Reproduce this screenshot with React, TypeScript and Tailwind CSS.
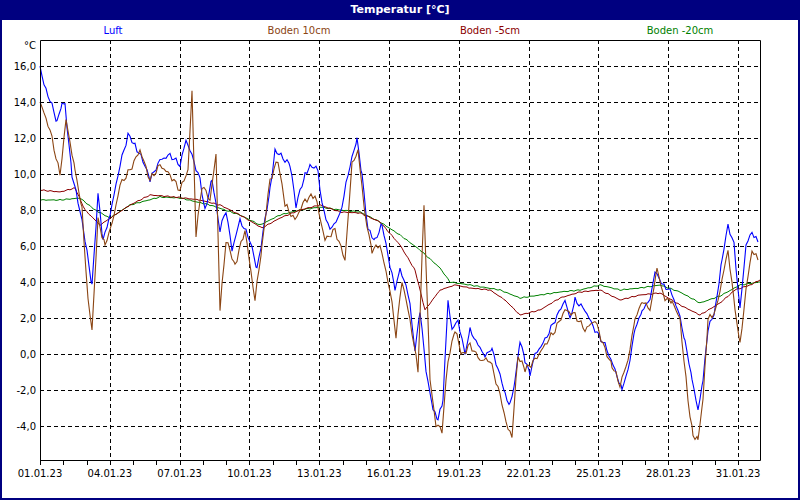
const blue = [
  [40, 66], [44, 85], [50, 100], [54, 112], [57, 122], [62, 102], [65, 105], [72, 175], [80, 210], [85, 240], [92, 285], [98, 195], [103, 240], [110, 215], [120, 165], [128, 135], [135, 145], [145, 165], [150, 180], [160, 160], [170, 155], [180, 165], [186, 140], [190, 150], [200, 180], [205, 210], [212, 180], [220, 230], [226, 210], [232, 250], [240, 220], [250, 240], [257, 270], [265, 220], [270, 190], [275, 150], [285, 160], [290, 165], [296, 205], [305, 175], [310, 165], [318, 170], [322, 205], [330, 230], [340, 215], [350, 165], [357, 140], [362, 175], [368, 230], [375, 240], [382, 225], [390, 265], [395, 290], [400, 270], [406, 285], [410, 305], [415, 350], [420, 310], [426, 370], [433, 410], [438, 420], [443, 400], [448, 300], [452, 330], [458, 320], [465, 355], [470, 330], [478, 345], [485, 355], [492, 350], [500, 375], [505, 395], [510, 405], [515, 380], [520, 340], [525, 360], [530, 375], [535, 355], [545, 340], [555, 320], [565, 300], [570, 320], [575, 300], [585, 310], [595, 330], [605, 345], [615, 370], [622, 390], [628, 370], [635, 330], [642, 310], [650, 300], [655, 270], [662, 285], [670, 290], [678, 310], [685, 340], [692, 380], [698, 410], [703, 380], [708, 330], [715, 310], [722, 260], [728, 225], [734, 245], [740, 310], [746, 245], [752, 232], [758, 242],
];
const brown = [
  [40, 102], [50, 130], [60, 175], [66, 120], [75, 170], [82, 210], [88, 300], [92, 330], [98, 220], [105, 245], [112, 225], [120, 185], [130, 170], [140, 150], [150, 180], [160, 165], [170, 175], [180, 190], [188, 170], [192, 92], [196, 235], [202, 185], [210, 200], [216, 155], [220, 310], [226, 240], [235, 265], [245, 230], [255, 300], [262, 245], [270, 180], [278, 160], [285, 205], [295, 220], [305, 200], [315, 195], [325, 240], [335, 230], [345, 260], [352, 165], [358, 150], [365, 215], [372, 250], [380, 245], [390, 290], [396, 335], [402, 280], [410, 320], [418, 370], [424, 205], [430, 380], [436, 425], [442, 430], [448, 360], [455, 330], [462, 355], [470, 345], [480, 360], [490, 360], [500, 395], [508, 430], [512, 435], [518, 355], [525, 370], [535, 360], [545, 345], [555, 330], [565, 310], [575, 315], [585, 330], [595, 320], [605, 350], [612, 365], [620, 385], [628, 360], [635, 320], [642, 300], [650, 310], [657, 270], [665, 300], [672, 300], [680, 320], [688, 400], [693, 435], [698, 440], [703, 400], [708, 320], [716, 310], [722, 280], [728, 250], [735, 310], [740, 345], [746, 290], [752, 250], [758, 260],
];
const red = [
  [40, 190], [60, 192], [75, 188], [85, 210], [100, 225], [115, 215], [130, 205], [150, 195], [175, 197], [200, 200], [220, 205], [240, 215], [262, 228], [280, 218], [300, 210], [320, 205], [340, 212], [360, 213], [380, 222], [400, 245], [415, 270], [425, 310], [440, 290], [455, 285], [470, 288], [490, 290], [505, 300], [520, 315], [540, 310], [560, 298], [580, 292], [600, 290], [620, 300], [640, 295], [660, 293], [680, 305], [700, 315], [720, 303], [735, 290], [750, 285], [760, 280],
];
const green = [
  [40, 200], [60, 200], [80, 198], [95, 210], [110, 218], [130, 205], [160, 197], [180, 198], [210, 205], [240, 215], [260, 225], [280, 215], [300, 210], [320, 207], [340, 210], [360, 212], [380, 222], [400, 235], [420, 250], [440, 268], [450, 282], [470, 285], [500, 290], [520, 298], [540, 295], [560, 292], [580, 290], [600, 285], [620, 290], [640, 288], [660, 285], [680, 292], [700, 303], [720, 296], [740, 285], [760, 282],
];

// resample every 2px and add a little deterministic wobble
const jitter = (a: number[][], amp: number, seed: number) => {
  const out: number[][] = [];
  for (let i = 0; i < a.length - 1; i++) {
    const [x0, y0] = a[i];
    const [x1, y1] = a[i + 1];
    for (let x = x0; x < x1; x += 2) {
      const t = (x - x0) / (x1 - x0);
      const n = Math.sin(x * 1.7 + seed) * Math.cos(x * 0.63 + seed * 2) * amp;
      out.push([x, y0 + (y1 - y0) * t + n]);
    }
  }
  out.push(a[a.length - 1]);
  return out;
};

const pts = (a: number[][]) => a.map(([x, y]) => `${x},${y.toFixed(1)}`).join(' ');
const dayX = (d: number) => 40 + d * 23.27;
const yVals = [16, 14, 12, 10, 8, 6, 4, 2, 0, -2, -4];
const yOf = (v: number) => 66 + (16 - v) * 18;
const dates = ['01', '04', '07', '10', '13', '16', '19', '22', '25', '28', '31'];

export default function App() {
  return (
    <div className="w-[800px] h-[500px] bg-white flex flex-col text-[11px]" style={{ fontFamily: '"DejaVu Sans", Verdana, sans-serif' }}>
      <div className="h-[20px] bg-[#000080] text-white font-bold flex items-center justify-center text-[11px]">
        Temperatur [°C]
      </div>
      <div className="flex-1 flex flex-col border-x-2 border-b-2 border-[#000080]">
        <div className="h-[20px] flex items-center -ml-[2px] text-[10px]">
          <div className="w-[226px] text-center text-[#0000ff]">Luft</div>
          <div className="w-[146px] text-center text-[#8b4513]">Boden 10cm</div>
          <div className="w-[236px] text-center text-[#8b0000]">Boden -5cm</div>
          <div className="w-[144px] text-center text-[#008000]">Boden -20cm</div>
        </div>
        <svg width="796" height="458" viewBox="2 40 796 458" className="block" fontSize="10">
          {yVals.map((v) => (
            <g key={v}>
              <line x1="40" x2="760" y1={yOf(v) + 0.5} y2={yOf(v) + 0.5} stroke="#000" strokeDasharray="4 3" />
              <text x="36" y={yOf(v) + 4} textAnchor="end" fill="#000">{v.toFixed(1).replace('.', ',')}</text>
            </g>
          ))}
          <text x="36" y="49" textAnchor="end" fill="#000">°C</text>
          {dates.map((d, i) => (
            <g key={d}>
              {i > 0 && <line x1={Math.round(dayX(i * 3)) + 0.5} x2={Math.round(dayX(i * 3)) + 0.5} y1="40" y2="460" stroke="#000" strokeDasharray="4 3" />}
              <text x={dayX(i * 3)} y="477" textAnchor="middle" fill="#000">{d}.01.23</text>
            </g>
          ))}
          {Array.from({ length: 31 }, (_, i) => (
            <line key={i} x1={Math.round(dayX(i)) + 0.5} x2={Math.round(dayX(i)) + 0.5} y1="460" y2="465" stroke="#000" />
          ))}
          <polyline points={pts(jitter(green, 0.6, 3))} fill="none" stroke="#008000" strokeWidth="1" />
          <polyline points={pts(jitter(red, 0.6, 5))} fill="none" stroke="#8b0000" strokeWidth="1" />
          <polyline points={pts(jitter(blue, 3, 1))} fill="none" stroke="#0000ff" strokeWidth="1.1" />
          <polyline points={pts(jitter(brown, 3.5, 7))} fill="none" stroke="#8b4513" strokeWidth="1.1" />
          <path d="M40.5 40.5 H760.5 V460.5 H40.5 Z" fill="none" stroke="#000" />
        </svg>
      </div>
    </div>
  );
}
